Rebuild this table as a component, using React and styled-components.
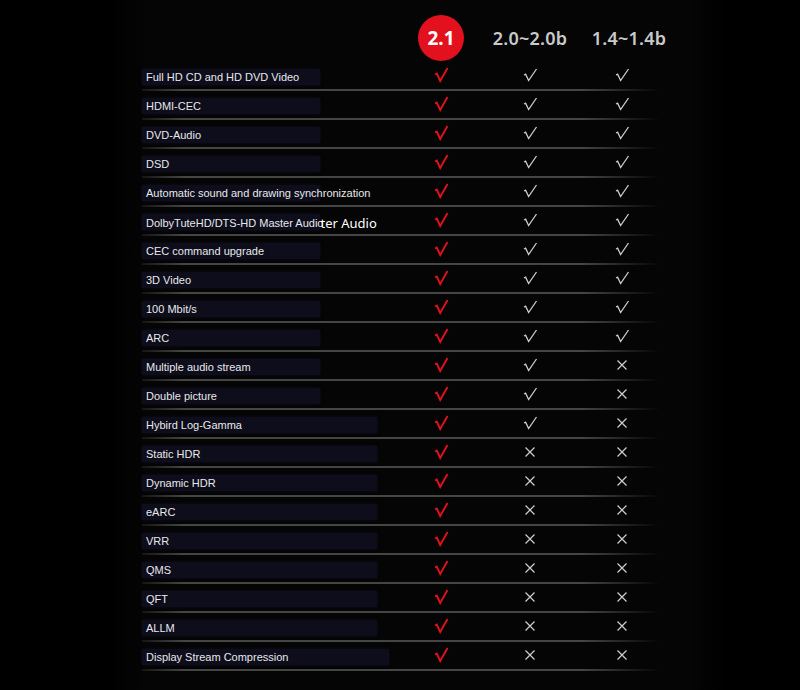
import React from "react";
import styled, { createGlobalStyle } from "styled-components";

const Global = createGlobalStyle`
  html, body { margin: 0; padding: 0; background: #000; }
  body { font-family: "Liberation Sans", Arial, sans-serif; }
`;

const Page = styled.div`
  width: 800px;
  height: 690px;
  background: #000;
  display: flex;
  padding-left: 110px;
  box-sizing: border-box;
  overflow: hidden;
`;

const Panel = styled.div`
  width: 615px;
  height: 690px;
  background: linear-gradient(to right, #000 0%, #050505 6%, #050505 94%, #000 100%);
  display: flex;
  flex-direction: column;
  padding-left: 32px;
  box-sizing: border-box;
`;

const Grid = styled.div`
  display: grid;
  width: 518px;
  grid-template-columns: 268px 62px 116px 68px;
  align-items: center;
`;

const Header = styled(Grid)`
  padding-top: 13px;
  height: 49px;
`;

const Badge = styled.div`
  justify-self: center;
  width: 46px;
  height: 46px;
  border-radius: 50%;
  background: #e3101e;
  color: #fff;
  font-family: "Noto Sans", "Open Sans", sans-serif;
  font-weight: 700;
  font-size: 19px;
  display: flex;
  align-items: center;
  justify-content: center;
`;

const Version = styled.div`
  justify-self: center;
  color: #c9c9c9;
  font-family: "Noto Sans", "Open Sans", sans-serif;
  font-weight: 600;
  font-size: 18px;
  letter-spacing: 0.2px;
  transform: translateX(${(p) => p.$shift || 0}px);
  white-space: nowrap;
`;

const Row = styled(Grid)`
  height: 29px;
  background: linear-gradient(
      to right,
      rgba(70, 70, 70, 0.25) 0%,
      #454545 8%,
      #454545 85%,
      rgba(70, 70, 70, 0) 100%
    )
    left bottom / 100% 2px no-repeat;
`;

const LabelCell = styled.div`
  align-self: start;
  padding-top: 7px;
`;

const LabelBox = styled.div`
  width: ${(p) => p.$w}px;
  height: 16px;
  background: #0d0d1b;
  box-shadow: 0 0 3px #0d0d1b;
  padding-left: 4px;
  box-sizing: border-box;
  color: #e9e9e9;
  font-size: 11px;
  line-height: 16px;
  white-space: nowrap;
  overflow: visible;
`;

const Overlay = styled.span`
  font-family: "Noto Sans", "Open Sans", sans-serif;
  font-size: 13px;
  color: #fff;
  margin-left: -3px;
  position: relative;
  top: 1px;
`;

const MarkCell = styled.div`
  justify-self: center;
  display: flex;
  align-items: center;
  justify-content: center;
  height: 16px;
  margin-top: -4px;
`;

const Check = ({ red }) => (
  <svg width="15" height="16" viewBox="0 0 15 16">
    <path
      d={red ? "M1 7.5 L2.8 6.5 L6.2 14 L13.5 1" : "M1 8 L2.6 7.2 L5.6 13.5 L13.5 2"}
      fill="none"
      stroke={red ? "#e3101e" : "#cfcfcf"}
      strokeWidth={red ? 1.9 : 1.3}
      strokeLinejoin="miter"
      strokeLinecap="butt"
    />
  </svg>
);

const Cross = () => (
  <svg width="12" height="12" viewBox="0 0 12 12">
    <path d="M1.5 1.5 L10.5 10.5 M10.5 1.5 L1.5 10.5" stroke="#cfcfcf" strokeWidth="1.2" fill="none" />
  </svg>
);

const rows = [
  ["Full HD CD and HD DVD Video", 178, 3],
  ["HDMI-CEC", 178, 3],
  ["DVD-Audio", 178, 3],
  ["DSD", 178, 3],
  ["Automatic sound and drawing synchronization", 178, 3],
  ["DolbyTuteHD/DTS-HD Master Audio", 178, 3, true],
  ["CEC command upgrade", 178, 3],
  ["3D Video", 178, 3],
  ["100 Mbit/s", 178, 3],
  ["ARC", 178, 3],
  ["Multiple audio stream", 178, 2],
  ["Double picture", 178, 2],
  ["Hybird Log-Gamma", 235, 2],
  ["Static HDR", 235, 1],
  ["Dynamic HDR", 235, 1],
  ["eARC", 235, 1],
  ["VRR", 235, 1],
  ["QMS", 235, 1],
  ["QFT", 235, 1],
  ["ALLM", 235, 1],
  ["Display Stream Compression", 247, 1],
];

export default function App() {
  return (
    <Page>
      <Global />
      <Panel>
        <Header>
          <div />
          <Badge>2.1</Badge>
          <Version>2.0~2.0b</Version>
          <Version $shift={7}>1.4~1.4b</Version>
        </Header>
        {rows.map(([label, w, n, overlay]) => (
          <Row key={label}>
            <LabelCell>
              <LabelBox $w={w}>
                {overlay ? (
                  <>
                    {label}
                    <Overlay>ter Audio</Overlay>
                  </>
                ) : (
                  label
                )}
              </LabelBox>
            </LabelCell>
            <MarkCell>
              <Check red />
            </MarkCell>
            <MarkCell>{n >= 2 ? <Check /> : <Cross />}</MarkCell>
            <MarkCell>{n >= 3 ? <Check /> : <Cross />}</MarkCell>
          </Row>
        ))}
      </Panel>
    </Page>
  );
}
